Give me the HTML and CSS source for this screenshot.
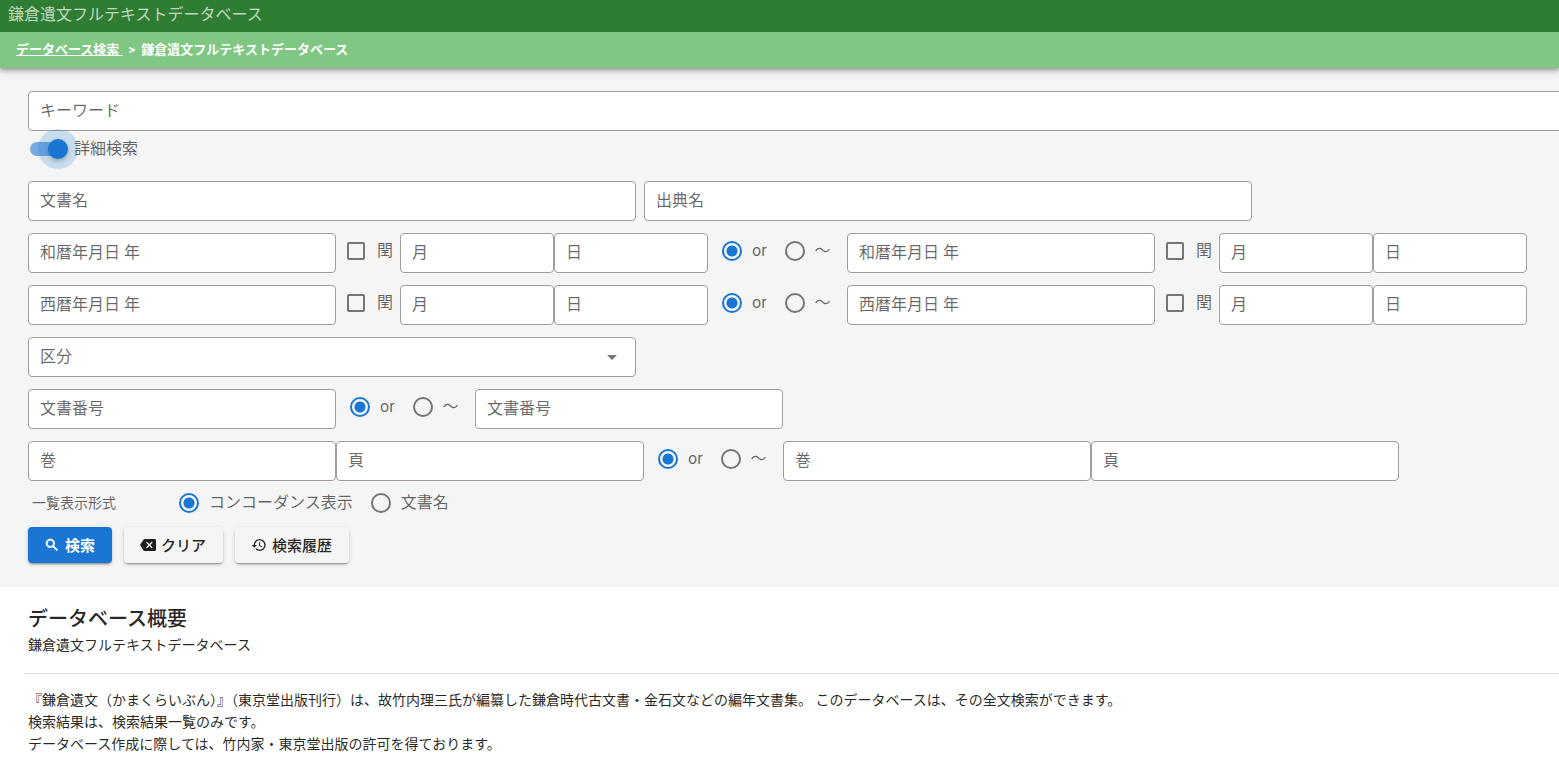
FILE: index.html
```
<!DOCTYPE html>
<html lang="ja">
<head>
  <meta charset="utf-8">
  <title>鎌倉遺文フルテキストデータベース</title>
  <link rel="stylesheet" href="styles.css">
</head>
<body>
  <header class="app-header">
    <div class="system-bar">鎌倉遺文フルテキストデータベース</div>
    <nav class="breadcrumb">
      <a href="#">データベース検索&nbsp;</a>
      <span class="separator">&gt;</span>
      <span>鎌倉遺文フルテキストデータベース</span>
    </nav>
  </header>

  <main>
    <section class="search">
      <form class="search-form">
        <input class="field" type="text" placeholder="キーワード" aria-label="キーワード">
        <label class="switch"><input type="checkbox" checked>詳細検索</label>

        <div class="rows">
          <div class="row row-wide">
            <input class="field" type="text" placeholder="文書名" aria-label="文書名">
            <input class="field" type="text" placeholder="出典名" aria-label="出典名">
          </div>

          <!-- 和暦 -->
          <div class="row">
            <input class="field w20" type="text" placeholder="和暦年月日 年" aria-label="和暦 開始年">
            <label class="check"><input type="checkbox">閏</label>
            <input class="field w10" type="text" placeholder="月" aria-label="和暦 開始月">
            <input class="field w10" type="text" placeholder="日" aria-label="和暦 開始日">
            <div class="range">
              <label class="radio"><input type="radio" name="wareki" checked>or</label>
              <label class="radio"><input type="radio" name="wareki">～</label>
            </div>
            <input class="field w20" type="text" placeholder="和暦年月日 年" aria-label="和暦 終了年">
            <label class="check"><input type="checkbox">閏</label>
            <input class="field w10" type="text" placeholder="月" aria-label="和暦 終了月">
            <input class="field w10" type="text" placeholder="日" aria-label="和暦 終了日">
          </div>

          <!-- 西暦 -->
          <div class="row">
            <input class="field w20" type="text" placeholder="西暦年月日 年" aria-label="西暦 開始年">
            <label class="check"><input type="checkbox">閏</label>
            <input class="field w10" type="text" placeholder="月" aria-label="西暦 開始月">
            <input class="field w10" type="text" placeholder="日" aria-label="西暦 開始日">
            <div class="range">
              <label class="radio"><input type="radio" name="seireki" checked>or</label>
              <label class="radio"><input type="radio" name="seireki">～</label>
            </div>
            <input class="field w20" type="text" placeholder="西暦年月日 年" aria-label="西暦 終了年">
            <label class="check"><input type="checkbox">閏</label>
            <input class="field w10" type="text" placeholder="月" aria-label="西暦 終了月">
            <input class="field w10" type="text" placeholder="日" aria-label="西暦 終了日">
          </div>

          <div class="row row-wide">
            <div class="select-box">
              <select class="field" aria-label="区分">
                <option>区分</option>
              </select>
              <svg class="arrow" viewBox="0 0 24 24"><path d="M7 10l5 5 5-5z"/></svg>
            </div>
          </div>

          <div class="row">
            <input class="field w20" type="text" placeholder="文書番号" aria-label="文書番号 開始">
            <div class="range">
              <label class="radio"><input type="radio" name="number" checked>or</label>
              <label class="radio"><input type="radio" name="number">～</label>
            </div>
            <input class="field w20" type="text" placeholder="文書番号" aria-label="文書番号 終了">
          </div>

          <div class="row">
            <input class="field w20" type="text" placeholder="巻" aria-label="開始巻">
            <input class="field w20" type="text" placeholder="頁" aria-label="開始頁">
            <div class="range">
              <label class="radio"><input type="radio" name="volume" checked>or</label>
              <label class="radio"><input type="radio" name="volume">～</label>
            </div>
            <input class="field w20" type="text" placeholder="巻" aria-label="終了巻">
            <input class="field w20" type="text" placeholder="頁" aria-label="終了頁">
          </div>
        </div>

        <div class="format" role="radiogroup" aria-labelledby="formatTitle">
          <span class="format-title" id="formatTitle">一覧表示形式</span>
          <label class="radio"><input type="radio" name="format" checked>コンコーダンス表示</label>
          <label class="radio"><input type="radio" name="format">文書名</label>
        </div>

        <div class="buttons">
          <button class="btn btn-primary" type="submit">
            <svg viewBox="0 0 24 24"><path d="M9.5 3A6.5 6.5 0 0 1 16 9.5c0 1.61-.59 3.09-1.56 4.23l.27.27h.79l5 5-1.5 1.5-5-5v-.79l-.27-.27A6.516 6.516 0 0 1 9.5 16a6.5 6.5 0 0 1 0-13m0 2C7 5 5 7 5 9.5S7 14 9.5 14 14 12 14 9.5 12 5 9.5 5z"/></svg>
            検索
          </button>
          <button class="btn" type="reset">
            <svg viewBox="0 0 24 24"><path d="M22 3H7c-.69 0-1.23.35-1.59.88L0 12l5.41 8.11c.36.53.9.89 1.59.89h15a2 2 0 0 0 2-2V5a2 2 0 0 0-2-2m-3 12.59L17.59 17 14 13.41 10.41 17 9 15.59 12.59 12 9 8.41 10.41 7 14 10.59 17.59 7 19 8.41 15.41 12"/></svg>
            クリア
          </button>
          <button class="btn" type="button">
            <svg viewBox="0 0 24 24"><path d="M13.5 8H12v5l4.28 2.54.72-1.21-3.5-2.08V8M13 3a9 9 0 0 0-9 9H1l3.96 4.03L9 12H6a7 7 0 0 1 7-7 7 7 0 0 1 7 7 7 7 0 0 1-7 7c-1.93 0-3.68-.79-4.94-2.06l-1.42 1.42A8.896 8.896 0 0 0 13 21a9 9 0 0 0 9-9 9 9 0 0 0-9-9"/></svg>
            検索履歴
          </button>
        </div>
      </form>
    </section>

    <section class="overview">
      <div class="overview-head">
        <h1>データベース概要</h1>
        <p>鎌倉遺文フルテキストデータベース</p>
      </div>
      <p class="overview-text">
        『鎌倉遺文（かまくらいぶん）』（東京堂出版刊行）は、故竹内理三氏が編纂した鎌倉時代古文書・金石文などの編年文書集。 このデータベースは、その全文検索ができます。<br>
        検索結果は、検索結果一覧のみです。<br>
        データベース作成に際しては、竹内家・東京堂出版の許可を得ております。
      </p>
    </section>
  </main>
</body>
</html>
```

FILE: styles.css
```
* {
  box-sizing: border-box;
}

body {
  margin: 0;
  background-color: #fff;
  color: rgba(0, 0, 0, 0.87);
  font-family: Roboto, "Noto Sans CJK JP", sans-serif;
  font-size: 14px;
  line-height: 22px;
  overflow-x: hidden;
}

h1,
p {
  margin: 0;
}

input,
select,
button {
  margin: 0;
  font-family: inherit;
}

svg {
  fill: currentColor;
}

/* header */
.app-header {
  position: relative;
  color: #fff;
  box-shadow: 0 2px 4px rgba(0, 0, 0, 0.3), 0 4px 8px rgba(0, 0, 0, 0.14);
}

.system-bar {
  height: 32px;
  padding: 0 8px;
  background-color: #2e7d32;
  color: rgba(255, 255, 255, 0.7);
  font-size: 16px;
  line-height: 30px;
}

.breadcrumb {
  display: flex;
  align-items: center;
  gap: 6px;
  height: 36px;
  padding: 0 16px;
  background-color: #81c784;
  font-size: 13px;
  font-weight: bold;
}

.breadcrumb a {
  color: #fff;
}

/* search form */
.search {
  background-color: #f5f5f5;
  overflow: hidden;
}

.search-form {
  margin-right: -9px;
  padding: 23px 0 24px 28px;
}

.field {
  display: block;
  width: 100%;
  height: 40px;
  padding: 0 11px 2px;
  border: 1px solid #9e9e9e;
  border-radius: 4px;
  background-color: #fff;
  color: rgba(0, 0, 0, 0.6);
  font-size: 16px;
}

.field::placeholder {
  color: rgba(0, 0, 0, 0.6);
  opacity: 1;
}

.rows {
  display: flex;
  flex-direction: column;
  gap: 12px;
  margin-top: 14px;
}

.row {
  display: flex;
}

.w20 {
  flex: 0 0 20%;
  width: 20%;
}

.w10 {
  flex: 0 0 10%;
  width: 10%;
}

.row-wide {
  gap: 8px;
}

.row-wide > * {
  flex: 0 0 auto;
  width: calc(40% - 8px);
}

.select-box {
  position: relative;
}

.select-box select {
  appearance: none;
}

.arrow {
  position: absolute;
  top: 8px;
  right: 12px;
  width: 24px;
  height: 24px;
  color: #757575;
  pointer-events: none;
}

/* switch, checkbox, radio */
.switch,
.check,
.radio {
  display: flex;
  align-items: center;
  color: rgba(0, 0, 0, 0.6);
  font-size: 16px;
  white-space: nowrap;
}

.switch {
  width: max-content;
  height: 36px;
  gap: 6px;
  padding-left: 2px;
}

.switch input {
  position: relative;
  appearance: none;
  width: 38px;
  height: 14px;
  border-radius: 7px;
  background: linear-gradient(to right, #74aae1 36px, transparent 36px);
}

.switch input::before {
  content: "";
  position: absolute;
  top: -3px;
  right: 0;
  width: 20px;
  height: 20px;
  border-radius: 50%;
  background-color: #1976d2;
  box-shadow: 0 0 0 10px rgba(25, 118, 210, 0.2), 0 2px 4px rgba(0, 0, 0, 0.3);
}

.check {
  flex: 0 0 64px;
  gap: 12px;
  padding: 0 0 4px 11px;
}

.check input {
  appearance: none;
  width: 18px;
  height: 18px;
  border: 2px solid #757575;
  border-radius: 2px;
}

.range {
  display: flex;
  flex: 0 0 139px;
  gap: 18px;
  padding: 0 0 4px 14px;
}

.radio {
  gap: 10px;
}

.radio input {
  appearance: none;
  width: 20px;
  height: 20px;
  border: 2px solid #757575;
  border-radius: 50%;
}

.radio input:checked {
  border-color: #1976d2;
  background: radial-gradient(circle, #1976d2 5px, transparent 6px);
}

.format {
  display: flex;
  align-items: center;
  gap: 18px;
  height: 44px;
  padding-left: 4px;
}

.format-title {
  width: 129px;
  color: rgba(0, 0, 0, 0.6);
}

/* buttons */
.buttons {
  display: flex;
  gap: 12px;
  margin-top: 2px;
}

.btn {
  display: flex;
  align-items: center;
  gap: 5px;
  height: 36px;
  padding: 0 17px 1px 16px;
  border: none;
  border-radius: 4px;
  background-color: #f5f5f5;
  color: rgba(0, 0, 0, 0.87);
  font-size: 15px;
  font-weight: 500;
  box-shadow: 0 3px 1px -2px rgba(0, 0, 0, 0.2), 0 2px 2px rgba(0, 0, 0, 0.14), 0 1px 5px rgba(0, 0, 0, 0.12);
  cursor: pointer;
}

.btn svg {
  width: 16px;
  height: 16px;
}

.btn-primary {
  background-color: #1976d2;
  color: #fff;
  font-weight: bold;
}

.btn-primary svg {
  stroke: currentColor;
}

/* overview */
.overview {
  padding-left: 24px;
}

.overview-head {
  padding: 17px 4px 17px;
  border-bottom: 1px solid #e0e0e0;
}

.overview-head h1 {
  font-size: 20px;
  font-weight: 500;
  line-height: 30px;
}

.overview-text {
  padding: 15px 4px;
}
```
